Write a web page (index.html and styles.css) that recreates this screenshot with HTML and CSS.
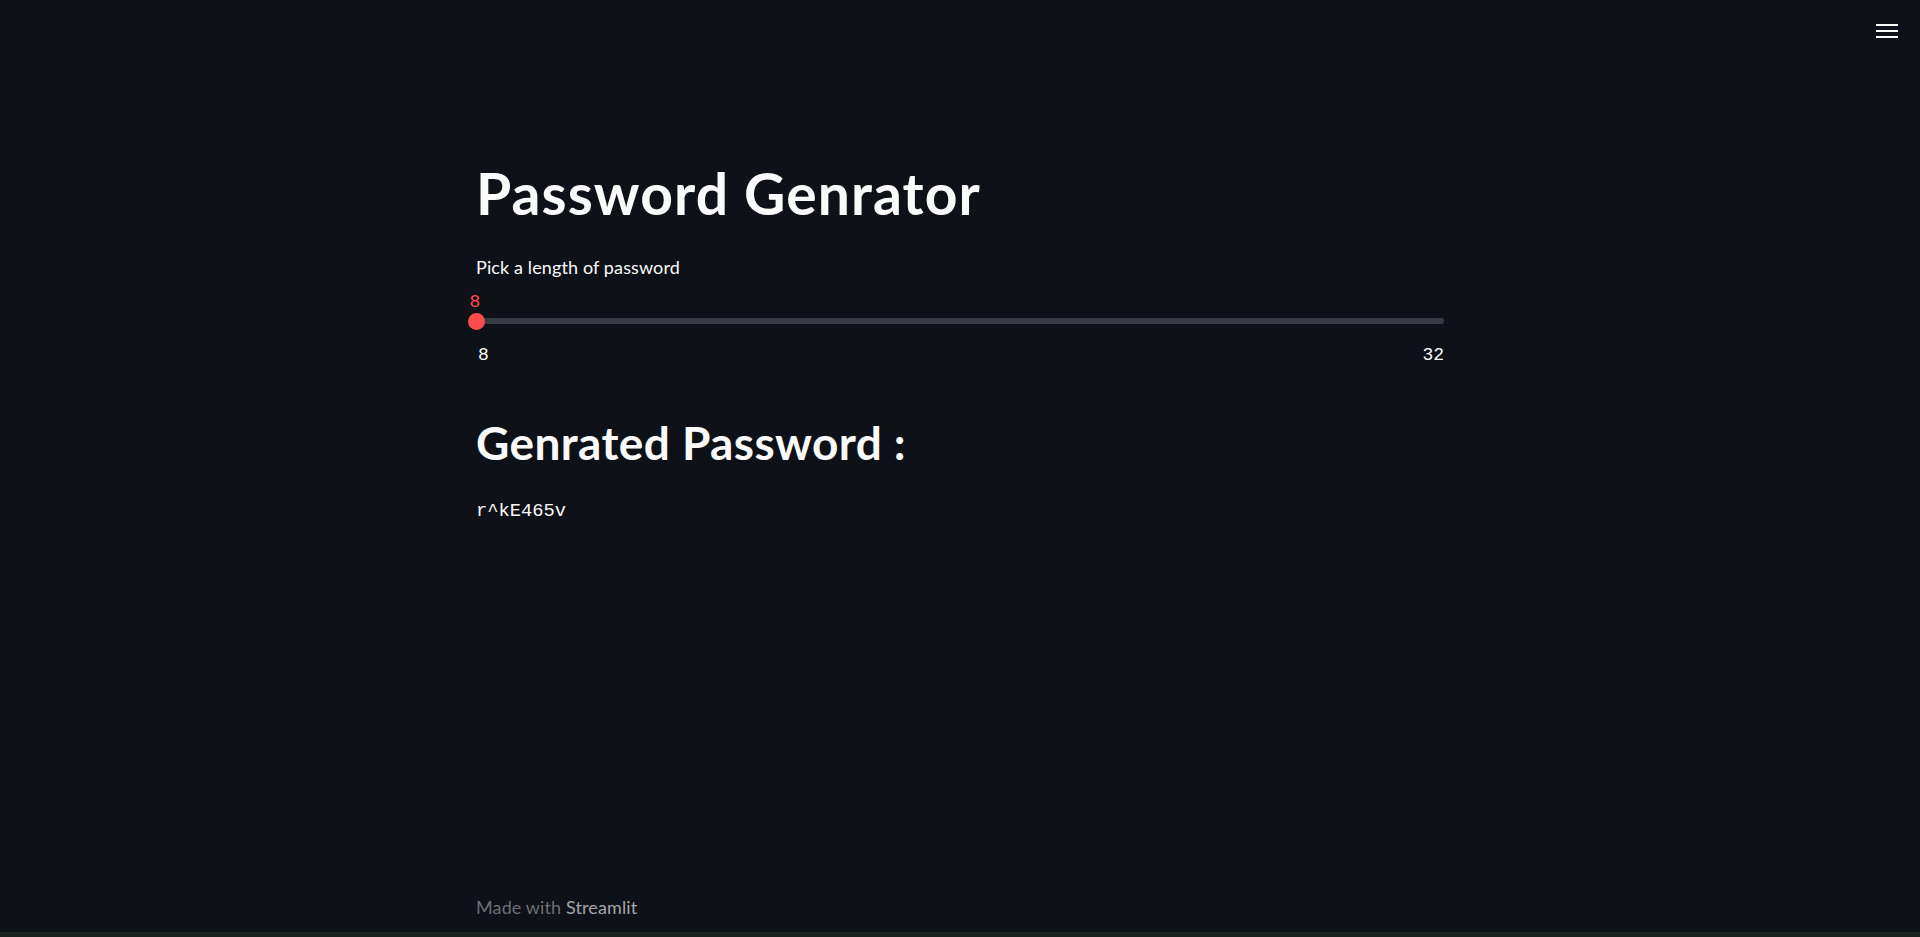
FILE: index.html
```html
<!DOCTYPE html>
<html lang="en">
<head>
<meta charset="utf-8">
<title>Password Genrator</title>
<link rel="stylesheet" href="styles.css">
</head>
<body>
<div class="app">
  <header class="topbar">
    <button class="menu" aria-label="Menu">
      <span class="menu-line"></span>
      <span class="menu-line"></span>
      <span class="menu-line"></span>
    </button>
  </header>
  <main class="block">
    <h1 class="title">Password Genrator</h1>
    <div class="slider">
      <label class="slider-label">Pick a length of password</label>
      <div class="slider-value">8</div>
      <div class="slider-track-wrap">
        <div class="slider-track"></div>
        <div class="slider-thumb"></div>
      </div>
      <div class="slider-ticks">
        <span class="tick">8</span>
        <span class="tick">32</span>
      </div>
    </div>
    <h2 class="subtitle">Genrated Password :</h2>
    <p class="password">r^kE465v</p>
  </main>
  <footer class="footer">Made with <span class="footer-brand">Streamlit</span></footer>
  <div class="bottom-bar"></div>
</div>
</body>
</html>
```

FILE: styles.css
```css
html, body {
  margin: 0;
  padding: 0;
  background: #0e1117;
}

body {
  color: #fafafa;
  font-family: Lato, "Noto Sans", sans-serif;
}

.app {
  height: 937px;
  display: flex;
  flex-direction: column;
  overflow: hidden;
}

.topbar {
  height: 0;
  display: flex;
  justify-content: flex-end;
}

.menu {
  margin: 24px 22px 0 0;
  width: 22px;
  height: 14px;
  padding: 0;
  border: 0;
  background: transparent;
  display: flex;
  flex-direction: column;
  justify-content: space-between;
}

.menu-line {
  display: block;
  width: 22px;
  height: 2px;
  background: #fafafa;
}

.block {
  width: 968px;
  margin: 0 auto;
  padding-top: 159px;
}

.title {
  margin: 0;
  font-size: 57px;
  line-height: 68px;
  font-weight: 700;
  letter-spacing: 1.1px;
}

.slider-label {
  display: block;
  margin-top: 28px;
  font-size: 18px;
  line-height: 25px;
  letter-spacing: 0.12px;
}

.slider-value {
  margin-top: 12px;
  font-family: "Liberation Mono", monospace;
  font-size: 18px;
  line-height: 20px;
  color: #ff4b4b;
  width: 12px;
  margin-left: -7px;
  text-align: center;
}

.slider-track-wrap {
  position: relative;
  margin-top: 1px;
  height: 16px;
  display: flex;
  align-items: center;
}

.slider-track {
  flex: 1;
  height: 6px;
  border-radius: 3px;
  background: #383b44;
}

.slider-thumb {
  position: absolute;
  left: -8px;
  top: -0.5px;
  width: 17px;
  height: 17px;
  border-radius: 50%;
  background: #ff4b4b;
}

.slider-ticks {
  margin-top: 16px;
  display: flex;
  justify-content: space-between;
  font-family: "Liberation Mono", monospace;
  font-size: 18px;
  line-height: 20px;
  color: #fafafa;
}

.tick:first-child {
  padding-left: 2px;
}

.subtitle {
  margin: 50px 0 0;
  font-size: 46px;
  line-height: 55px;
  font-weight: 700;
  letter-spacing: 0.4px;
}

.password {
  margin: 27px 0 0;
  font-family: "Liberation Mono", monospace;
  font-size: 18.75px;
  line-height: 28px;
}

.footer {
  margin: auto auto 0;
  width: 968px;
  padding-bottom: 12px;
  font-size: 18px;
  line-height: 25px;
  letter-spacing: 0.12px;
  color: #6d6f74;
}

.footer-brand {
  color: #a4a6a9;
}

.bottom-bar {
  height: 5px;
  background: #1a221f;
}
```
